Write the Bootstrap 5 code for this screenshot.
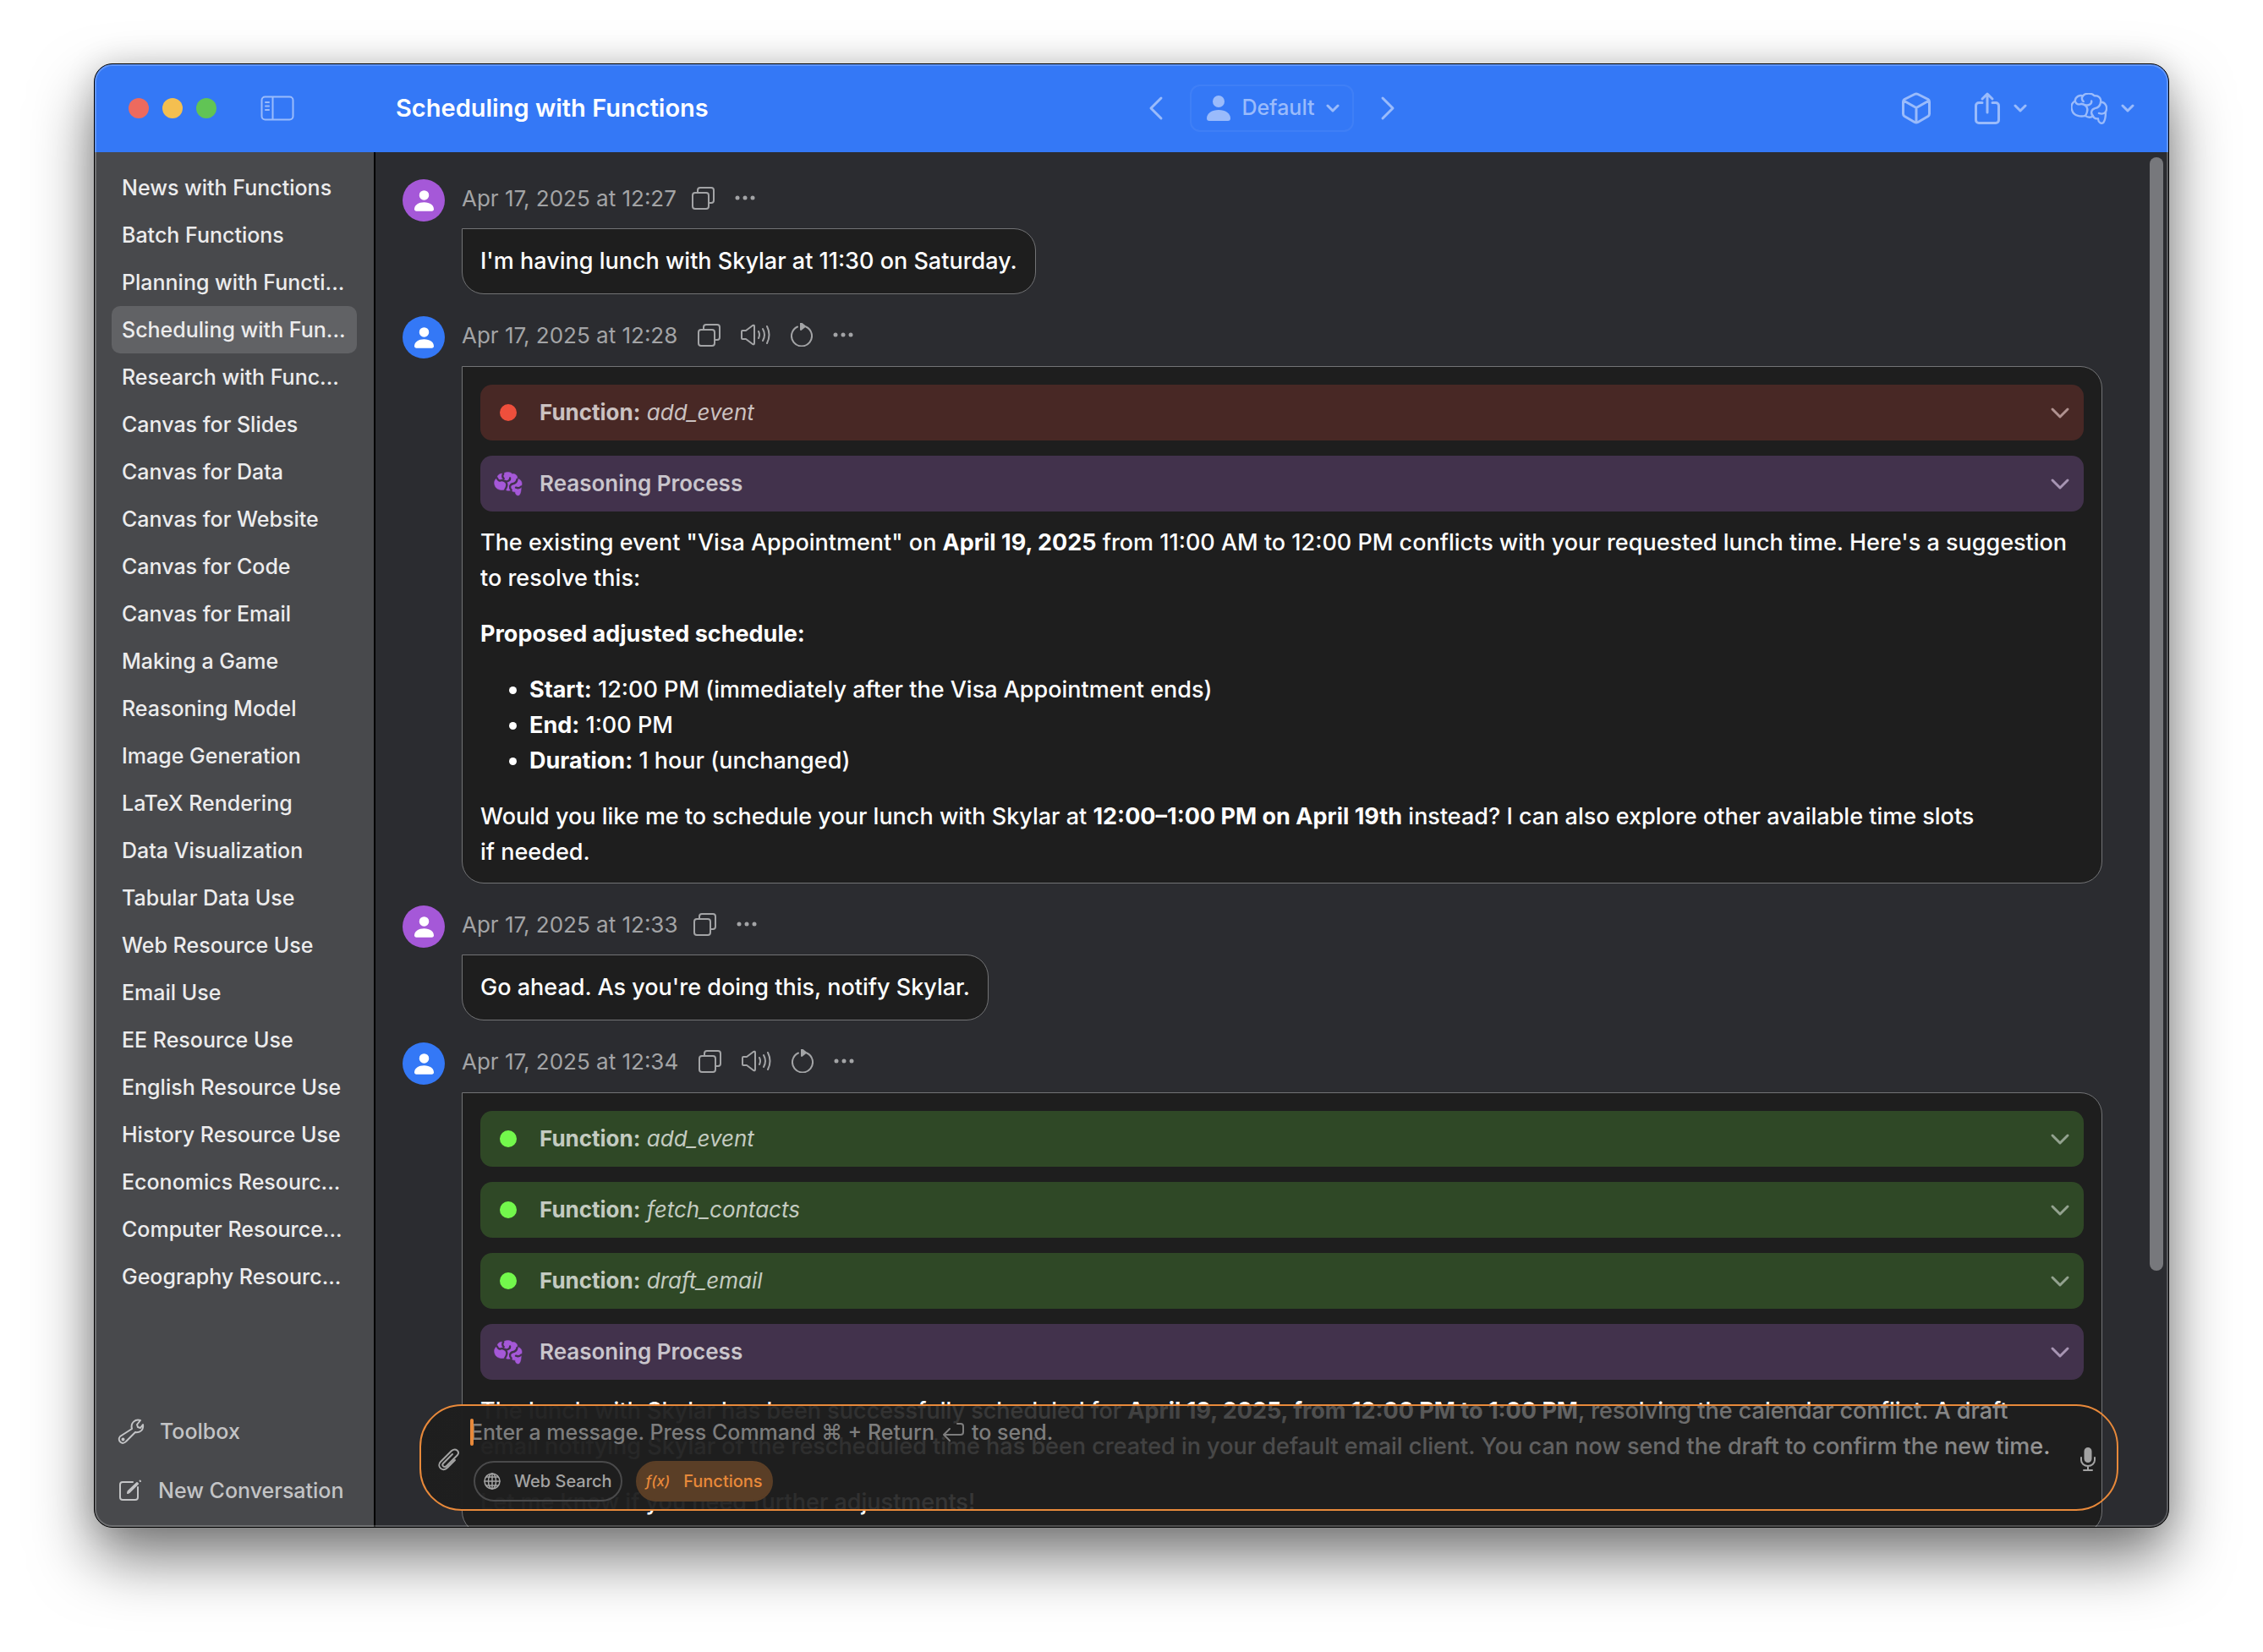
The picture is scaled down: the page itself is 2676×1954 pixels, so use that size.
<!DOCTYPE html>
<html lang="en" data-bs-theme="dark">
<head>
<meta charset="utf-8">
<meta name="viewport" content="width=device-width, initial-scale=1">
<title>Scheduling with Functions</title>
<link href="https://cdn.jsdelivr.net/npm/bootstrap@5.3.0/dist/css/bootstrap.min.css" rel="stylesheet">
<style>
  body { font-family: Inter, "Liberation Sans", sans-serif; background: #fff; height: 100vh; padding: 75px 111px 147px; overflow: hidden; }
  svg { display: block; fill: none; stroke: currentColor; stroke-width: 2; stroke-linecap: round; stroke-linejoin: round; overflow: visible; flex: none; }
  .app-window { height: 100%; border: 1px solid #000; border-radius: 22px; overflow: hidden; background: #2b2c30; box-shadow: 0 36px 72px rgba(0,0,0,.52), 0 0 36px rgba(0,0,0,.14); }
  .app-window::after { content: ""; position: absolute; inset: 0; border: 2px solid rgba(255,255,255,.22); border-radius: 21px; pointer-events: none; z-index: 5; }
  .icon-btn { border: 0; background: none; padding: 0; color: inherit; display: flex; align-items: center; }

  .titlebar { height: 104px; background: #3478f6; color: #9abbfb; flex: none; }
  .titlebar-start { width: 332px; padding-left: 40px; flex: none; }
  .titlebar-mid { padding-left: 332px; }
  .titlebar-end { padding-right: 40px; gap: 52px; }
  .light { width: 24px; height: 24px; border-radius: 50%; border: 0; padding: 0; }
  .light-close { background: #ed6a5e; }
  .light-min { background: #f4bf50; }
  .light-max { background: #61c455; }
  .side-toggle { margin-left: 36px; }
  .win-title { font-size: 29px; font-weight: 600; color: #fff; line-height: 36px; }
  .persona { height: 56px; border: 2px solid rgba(255,255,255,.06); border-radius: 12px; background: none; color: inherit; font-size: 25px; font-weight: 500; padding: 0 15px 0 18px; gap: 13px; }

  .sidebar { width: 332px; background: #48494c; border-right: 2px solid #000; padding: 14px 20px 23px; font-weight: 500; flex: none; }
  .convo { font-size: 25px; line-height: 56px; height: 56px; padding: 0 12px; border-radius: 10px; color: #ececed; text-decoration: none; }
  .convo.active { background: #616265; }
  .side-list { gap: 30px; }
  .side-action { font-size: 25px; font-weight: 500; line-height: 40px; color: #c3c4c6; padding: 0 8px; gap: 19px; }

  .chat { padding: 32px 78px 0 32px; }
  .msg { gap: 20px; margin-bottom: 26px; }
  .avatar { width: 50px; height: 50px; border-radius: 50%; color: #fff; flex: none; }
  .avatar-me { background: #a558d8; }
  .avatar-bot { background: #3478f6; }
  .avatar svg, .solid { fill: currentColor; stroke: none; }
  .meta { height: 44px; margin-bottom: 14px; font-size: 26px; color: #a3a4a6; gap: 24px; }
  .meta time { margin-right: -6px; }
  .from-bot .meta { margin-bottom: 15px; }
  .from-bot .meta time { margin-right: 0; }
  .bubble { background: #1e1e1e; border: 1px solid #727375; border-radius: 0 26px 26px 26px; color: #fff; font-size: 27px; font-weight: 500; line-height: 42px; padding: 17px 21px; }
  .from-bot .bubble { padding: 21px 21px 15px; }
  .bubble p { margin: 0 0 24px; }
  .bubble ul { margin: 0 0 24px; padding-left: 58px; }
  .bubble strong { font-weight: 700; }
  .bubble > :last-child { margin-bottom: 0; }
  .step { width: 100%; height: 66px; border: 0; border-radius: 14px; margin-bottom: 18px; padding: 0 16px; font-size: 26px; color: rgba(255,255,255,.72); line-height: 36px; }
  .step-last { margin-bottom: 16px; }
  .bubble .step-think strong { font-weight: 600; }
  .step-lead { width: 34px; margin-right: 20px; flex: none; }
  .step-dot { width: 20px; height: 20px; border-radius: 50%; background: currentColor; }
  .step-chev { stroke-width: 2; }
  .step-err { background: #482825; } .step-err .step-lead { color: #ee4f3c; } .step-err .step-chev { color: #b09290; }
  .step-ok { background: #2f4826; } .step-ok .step-lead { color: #73f84c; } .step-ok .step-chev { color: #93a28f; }
  .step-think { background: #42324c; } .step-think .step-lead { color: #a558d8; } .step-think .step-chev { color: #a795b3; }
  .brain-solid { fill: currentColor; }
  .brain-cut { stroke: #42324c; stroke-width: 9; }
  .thumb { position: absolute; top: 6px; right: 6px; width: 16px; height: 81%; border-radius: 8px; background: #77787c; }

  .composer { position: absolute; left: 52px; right: 59px; bottom: 19px; height: 126px; border: 2px solid #e8893a; border-radius: 50px; padding: 14px 25px 10px 20px; color: #a3a3a3; background: linear-gradient(90deg, rgba(30,30,30,.98), rgba(30,30,30,.95) 18%, rgba(30,30,30,.86) 40%, rgba(30,30,30,.68) 70%, rgba(30,30,30,.5) 95%, rgba(30,30,30,0) 99%); }
  .compose-col { padding-left: 12px; }
  .entry { border: 0; background: none; outline: 0; padding: 0; height: 36px; color: #fff; caret-color: #e8893a; grid-area: 1 / 1; font-size: 25px; }
  .entry-hint { grid-area: 1 / 1; font-size: 25px; font-weight: 500; line-height: 36px; color: #7d7d7d; gap: 9px; pointer-events: none; }
  .entry-caret { grid-area: 1 / 1; width: 4px; height: 32px; border-radius: 2px; background: #e8893a; }
  .chip { height: 48px; border-radius: 24px; border: 2px solid #4a4a4b; background: none; color: #a3a3a3; font-size: 20px; font-weight: 500; padding: 0 10px; line-height: 44px; }
  .chip-on { background: #5a3e26; border-color: #5a3e26; color: #e8893a; }
  .fx { font-size: 17px; font-style: italic; }
</style>
</head>
<body>
<svg width="0" height="0" class="position-absolute" aria-hidden="true">
  <defs>
    <symbol id="person" viewBox="0 0 28 30"><circle cx="14" cy="7" r="7"/><path d="M0 27C0 21 6 17 14 17s14 4 14 10c0 2-1 3-3 3H3c-2 0-3-1-3-3z"/></symbol>
    <symbol id="down" viewBox="0 0 16 10"><path d="M2 2l6 6 6-6"/></symbol>
    <symbol id="copy" viewBox="0 0 27 27"><rect x="1" y="7" width="19" height="19" rx="3"/><path d="M7 7V4a3 3 0 0 1 3-3h13a3 3 0 0 1 3 3v12a3 3 0 0 1-3 3h-3"/></symbol>
    <symbol id="dots" viewBox="0 0 24 6"><circle cx="3" cy="3" r="2.5"/><circle cx="12" cy="3" r="2.5"/><circle cx="21" cy="3" r="2.5"/></symbol>
    <symbol id="speak" viewBox="0 0 35 26"><path d="M1 9v8q0 1 1 1h4l8 6q2 1 2-1V3q0-2-2-1L6 8H2q-1 0-1 1zM21 9q2 4 0 8M26 6q4 7 0 14M31 3q5 10 0 20"/></symbol>
    <symbol id="redo" viewBox="0 0 26 28"><path d="M18 4.500A12 12 0 1 1 8 4.500"/><path d="M12 0l5 4-5 4z" fill="currentColor"/></symbol>
    <symbol id="brain-shape" viewBox="0 0 128 110"><path d="M14 28C16 12 30 6 42 10 50-1 74-1 82 10 96 8 108 18 104 32 122 32 130 50 122 66 122 84 120 96 114 104 106 110 96 104 95 90 88 92 80 88 78 82 70 86 58 86 50 80 36 84 10 82 4 62-2 46 4 34 14 28z"/></symbol>
    <symbol id="brain-folds" viewBox="0 0 128 110"><path d="M14 28C18 40 26 42 36 38M42 10C36 16 38 26 44 30M36 38C52 40 62 52 56 68 54 74 52 78 50 80M50 42C62 46 74 38 72 28M104 34C102 46 94 52 84 54 70 58 68 72 78 82M122 66C116 74 106 74 98 71"/></symbol>
  </defs>
</svg>

<div class="app-window position-relative d-flex flex-column">
  <header class="titlebar position-relative d-flex align-items-center">
    <div class="titlebar-start d-flex align-items-center gap-3 position-relative z-1">
      <button class="light light-close" aria-label="Close"></button>
      <button class="light light-min" aria-label="Minimise"></button>
      <button class="light light-max" aria-label="Zoom"></button>
      <button class="icon-btn side-toggle" aria-label="Toggle sidebar">
        <svg width="40" height="30" viewBox="0 0 40 30" stroke-width="3"><rect x="1.500" y="1.500" width="37" height="27" rx="4"/><path d="M14.500 2v26" /><path d="M6 8h4M6 12.500h4M6 17h4" stroke-width="2"/></svg>
      </button>
    </div>
    <h1 class="win-title m-0 ms-4">Scheduling with Functions</h1>
    <div class="position-absolute titlebar-mid top-0 bottom-0 start-0 end-0 d-flex align-items-center justify-content-center gap-3">
      <button class="icon-btn px-3" aria-label="Previous persona"><svg width="16" height="28" viewBox="0 0 16 28"><path d="M14 2L2 14l12 12" stroke-width="3"/></svg></button>
      <button class="persona d-flex align-items-center">
        <svg class="solid" width="28" height="30"><use href="#person"/></svg>Default
        <svg width="16" height="10"><use href="#down" stroke-width="3"/></svg>
      </button>
      <button class="icon-btn px-3" aria-label="Next persona"><svg width="16" height="28" viewBox="0 0 16 28"><path d="M2 2l12 12L2 26" stroke-width="3"/></svg></button>
    </div>
    <div class="titlebar-end d-flex align-items-center ms-auto position-relative z-1">
      <button class="icon-btn" aria-label="Model"><svg width="34" height="38" viewBox="0 0 34 38"><path stroke-width="3" d="M15 2.500q2-1 4 0l12 6q1.500 1 1.500 3v14q0 2-1.500 3l-12 7q-2 1-4 0l-12-7q-1.500-1-1.500-3v-14q0-2 1.500-3zM2 10l15 8.500L32 10M17 18.500V36"/></svg></button>
      <button class="icon-btn gap-3" aria-label="Share"><svg width="30" height="38" viewBox="0 0 30 38"><path stroke-width="3" d="M9 12.500H5a3.500 3.500 0 0 0-3.500 3.500v17A3.500 3.500 0 0 0 5 36.500h20a3.500 3.500 0 0 0 3.500-3.500V16a3.500 3.500 0 0 0-3.500-3.500h-4M15 24V2M9 8l6-6 6 6"/></svg><svg width="16" height="10"><use href="#down" stroke-width="3"/></svg></button>
      <button class="icon-btn gap-3" aria-label="Reasoning"><svg width="43" height="37"><g stroke-width="7"><use href="#brain-shape"/><use href="#brain-folds"/></g></svg><svg width="16" height="10"><use href="#down" stroke-width="3"/></svg></button>
    </div>
  </header>

  <div class="d-flex flex-grow-1 overflow-hidden">
    <aside class="sidebar d-flex flex-column">
      <nav class="d-flex flex-column" aria-label="Conversations">
        <a href="#" class="convo text-truncate">News with Functions</a>
        <a href="#" class="convo text-truncate">Batch Functions</a>
        <a href="#" class="convo text-truncate">Planning with Functi...</a>
        <a href="#" class="convo text-truncate active" aria-current="page">Scheduling with Fun...</a>
        <a href="#" class="convo text-truncate">Research with Func...</a>
        <a href="#" class="convo text-truncate">Canvas for Slides</a>
        <a href="#" class="convo text-truncate">Canvas for Data</a>
        <a href="#" class="convo text-truncate">Canvas for Website</a>
        <a href="#" class="convo text-truncate">Canvas for Code</a>
        <a href="#" class="convo text-truncate">Canvas for Email</a>
        <a href="#" class="convo text-truncate">Making a Game</a>
        <a href="#" class="convo text-truncate">Reasoning Model</a>
        <a href="#" class="convo text-truncate">Image Generation</a>
        <a href="#" class="convo text-truncate">LaTeX Rendering</a>
        <a href="#" class="convo text-truncate">Data Visualization</a>
        <a href="#" class="convo text-truncate">Tabular Data Use</a>
        <a href="#" class="convo text-truncate">Web Resource Use</a>
        <a href="#" class="convo text-truncate">Email Use</a>
        <a href="#" class="convo text-truncate">EE Resource Use</a>
        <a href="#" class="convo text-truncate">English Resource Use</a>
        <a href="#" class="convo text-truncate">History Resource Use</a>
        <a href="#" class="convo text-truncate">Economics Resourc...</a>
        <a href="#" class="convo text-truncate">Computer Resource...</a>
        <a href="#" class="convo text-truncate">Geography Resourc...</a>
      </nav>
      <div class="mt-auto d-flex flex-column side-list">
        <button class="icon-btn side-action"><svg width="30" height="30" viewBox="0 0 30 30"><path d="M16 12C14 5 20 0 26 2l-4 5 1 3 3 1 3-4c1 6-3 10-9 9L9 27C5 32-2 26 2 21z"/><circle cx="5.500" cy="24.500" r="1"/></svg>Toolbox</button>
        <button class="icon-btn side-action"><svg width="28" height="26" viewBox="0 0 28 26"><path d="M17 3H5a3 3 0 0 0-3 3v15a3 3 0 0 0 3 3h15a3 3 0 0 0 3-3V9M11 16l.5-2L22 4l1 1-10 10zM25.500 1.500l.5.5"/></svg>New Conversation</button>
      </div>
    </aside>

    <main class="position-relative flex-grow-1 overflow-hidden">
      <div class="chat">
        <article class="msg d-flex">
          <div class="avatar avatar-me d-flex align-items-center justify-content-center"><svg width="23" height="25"><use href="#person"/></svg></div>
          <div class="d-flex flex-column align-items-start">
            <div class="meta d-flex align-items-center"><time>Apr 17, 2025 at 12:27</time>
              <button class="icon-btn" aria-label="Copy"><svg width="27" height="27"><use href="#copy"/></svg></button>
              <button class="icon-btn" aria-label="More"><svg class="solid" width="24" height="6"><use href="#dots"/></svg></button></div>
            <div class="bubble">I'm having lunch with Skylar at 11:30 on Saturday.</div>
          </div>
        </article>

        <article class="msg from-bot d-flex">
          <div class="avatar avatar-bot d-flex align-items-center justify-content-center"><svg width="23" height="25"><use href="#person"/></svg></div>
          <div class="flex-grow-1">
            <div class="meta d-flex align-items-center"><time>Apr 17, 2025 at 12:28</time>
              <button class="icon-btn" aria-label="Copy"><svg width="27" height="27"><use href="#copy"/></svg></button>
              <button class="icon-btn" aria-label="Read aloud"><svg width="35" height="26"><use href="#speak"/></svg></button>
              <button class="icon-btn" aria-label="Regenerate"><svg width="26" height="28"><use href="#redo"/></svg></button>
              <button class="icon-btn" aria-label="More"><svg class="solid" width="24" height="6"><use href="#dots"/></svg></button></div>
            <div class="bubble">
              <button class="step step-err d-flex align-items-center"><span class="step-lead d-flex justify-content-center"><span class="step-dot"></span></span><span><strong>Function:</strong> <em>add_event</em></span><svg class="step-chev ms-auto" width="24" height="15"><use href="#down"/></svg></button>
              <button class="step step-think step-last d-flex align-items-center"><span class="step-lead"><svg width="34" height="29"><use class="brain-solid" href="#brain-shape"/><use class="brain-cut" href="#brain-folds"/></svg></span><strong>Reasoning Process</strong><svg class="step-chev ms-auto" width="24" height="15"><use href="#down"/></svg></button>
              <p>The existing event "Visa Appointment" on <strong>April 19, 2025</strong> from 11:00 AM to 12:00 PM conflicts with your requested lunch time. Here's a suggestion <br>to resolve this:</p>
              <p><strong>Proposed adjusted schedule:</strong></p>
              <ul>
                <li><strong>Start:</strong> 12:00 PM (immediately after the Visa Appointment ends)</li>
                <li><strong>End:</strong> 1:00 PM</li>
                <li><strong>Duration:</strong> 1 hour (unchanged)</li>
              </ul>
              <p>Would you like me to schedule your lunch with Skylar at <strong>12:00–1:00 PM on April 19th</strong> instead? I can also explore other available time slots <br>if needed.</p>
            </div>
          </div>
        </article>

        <article class="msg d-flex">
          <div class="avatar avatar-me d-flex align-items-center justify-content-center"><svg width="23" height="25"><use href="#person"/></svg></div>
          <div class="d-flex flex-column align-items-start">
            <div class="meta d-flex align-items-center"><time>Apr 17, 2025 at 12:33</time>
              <button class="icon-btn" aria-label="Copy"><svg width="27" height="27"><use href="#copy"/></svg></button>
              <button class="icon-btn" aria-label="More"><svg class="solid" width="24" height="6"><use href="#dots"/></svg></button></div>
            <div class="bubble">Go ahead. As you're doing this, notify Skylar.</div>
          </div>
        </article>

        <article class="msg from-bot d-flex">
          <div class="avatar avatar-bot d-flex align-items-center justify-content-center"><svg width="23" height="25"><use href="#person"/></svg></div>
          <div class="flex-grow-1">
            <div class="meta d-flex align-items-center"><time>Apr 17, 2025 at 12:34</time>
              <button class="icon-btn" aria-label="Copy"><svg width="27" height="27"><use href="#copy"/></svg></button>
              <button class="icon-btn" aria-label="Read aloud"><svg width="35" height="26"><use href="#speak"/></svg></button>
              <button class="icon-btn" aria-label="Regenerate"><svg width="26" height="28"><use href="#redo"/></svg></button>
              <button class="icon-btn" aria-label="More"><svg class="solid" width="24" height="6"><use href="#dots"/></svg></button></div>
            <div class="bubble">
              <button class="step step-ok d-flex align-items-center"><span class="step-lead d-flex justify-content-center"><span class="step-dot"></span></span><span><strong>Function:</strong> <em>add_event</em></span><svg class="step-chev ms-auto" width="24" height="15"><use href="#down"/></svg></button>
              <button class="step step-ok d-flex align-items-center"><span class="step-lead d-flex justify-content-center"><span class="step-dot"></span></span><span><strong>Function:</strong> <em>fetch_contacts</em></span><svg class="step-chev ms-auto" width="24" height="15"><use href="#down"/></svg></button>
              <button class="step step-ok d-flex align-items-center"><span class="step-lead d-flex justify-content-center"><span class="step-dot"></span></span><span><strong>Function:</strong> <em>draft_email</em></span><svg class="step-chev ms-auto" width="24" height="15"><use href="#down"/></svg></button>
              <button class="step step-think step-last d-flex align-items-center"><span class="step-lead"><svg width="34" height="29"><use class="brain-solid" href="#brain-shape"/><use class="brain-cut" href="#brain-folds"/></svg></span><strong>Reasoning Process</strong><svg class="step-chev ms-auto" width="24" height="15"><use href="#down"/></svg></button>
              <p>The lunch with Skylar has been successfully scheduled for <strong>April 19, 2025, from 12:00 PM to 1:00 PM</strong>, resolving the calendar conflict. A draft <br>email notifying Skylar of the rescheduled time has been created in your default email client. You can now send the draft to confirm the new time.</p>
              <p>Let me know if you need further adjustments!</p>
            </div>
          </div>
        </article>
      </div>
      <div class="thumb"></div>

      <form class="composer d-flex align-items-center">
        <button type="button" class="icon-btn" aria-label="Attach file"><svg width="26" height="28" viewBox="0 0 26 28"><path d="M20 15l-9 9C5 30-2 22 3 17L16 4c5-4 10 1 7 5L10 22c-3 3-6-1-4-3L17 8"/></svg></button>
        <div class="compose-col flex-grow-1 d-flex flex-column gap-3">
          <div class="d-grid align-items-center">
            <input class="entry w-100" id="entry" type="text">
            <label for="entry" class="entry-hint d-flex align-items-center m-0">Enter a message. Press Command ⌘ + Return <svg width="26" height="22" viewBox="0 0 26 22"><path d="M18 1h4q3 0 3 3v7q0 3-3 3H3M9 7l-7 7 7 7"/></svg> to send.</label>
            <span class="entry-caret"></span>
          </div>
          <div class="d-flex gap-3 ms-1">
            <button type="button" class="chip d-flex align-items-center"><svg class="me-3" width="20" height="20" viewBox="0 0 20 20"><g stroke-width="1.500"><circle cx="10" cy="10" r="9"/><ellipse cx="10" cy="10" rx="4.500" ry="9"/><path d="M10 1v18M1 10h18M3 5h14M3 15h14"/></g></svg>Web Search</button>
            <button type="button" class="chip chip-on d-flex align-items-center"><span class="fx me-3">f(x)</span>Functions</button>
          </div>
        </div>
        <button type="button" class="icon-btn" aria-label="Dictate"><svg width="18" height="28" viewBox="0 0 18 28"><rect x="5.500" y="1" width="7" height="16" rx="3.500" fill="currentColor"/><path d="M1 12v3a8 7 0 0 0 16 0v-3M9 22v5M4 27h10"/></svg></button>
      </form>
    </main>
  </div>
</div>
<script src="https://cdn.jsdelivr.net/npm/bootstrap@5.3.0/dist/js/bootstrap.bundle.min.js"></script>
</body>
</html>
